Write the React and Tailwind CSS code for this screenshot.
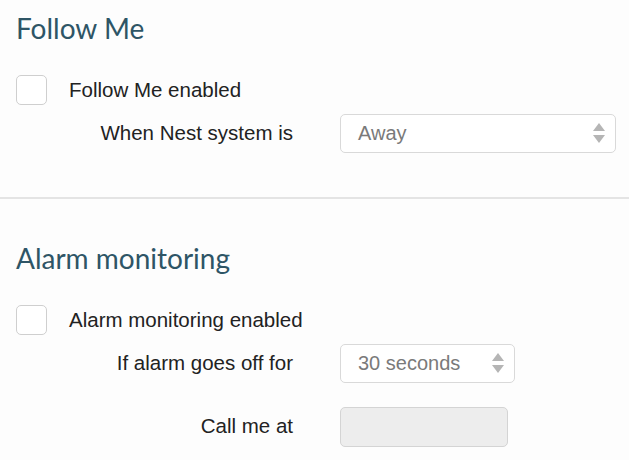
import React from "react";

function Arrows() {
  return (
    <svg width="12" height="20" viewBox="0 0 12 20" className="absolute right-[10px] top-1/2 -translate-y-1/2">
      <path d="M6 0 L12 8 L0 8 Z" fill="#b5b5b5" />
      <path d="M0 12 L12 12 L6 20 Z" fill="#b5b5b5" />
    </svg>
  );
}

function Select({ value, width }) {
  return (
    <div
      className={`relative h-[39px] rounded-[5px] border border-[#d9d9d9] bg-white flex items-center pl-[17px] text-[20px] text-[#7a7a7a] ${width}`}
    >
      {value}
      <Arrows />
    </div>
  );
}

function Checkbox() {
  return <div className="w-[31px] h-[30px] shrink-0 rounded-[5px] border border-[#cfcfcf] bg-white" />;
}

function Row({ label, children }) {
  return (
    <div className="flex items-center">
      <div className="w-[293px] shrink-0 text-right text-[20.5px] text-[#222]">{label}</div>
      <div className="ml-[47px] shrink-0">{children}</div>
    </div>
  );
}

export default function App() {
  const heading = { fontFamily: "Lato, 'Open Sans', sans-serif" };
  return (
    <div
      className="w-[629px] h-[460px] bg-[#fdfdfd] overflow-hidden"
      style={{ fontFamily: "'Liberation Sans', Arial, sans-serif" }}
    >
      <section className="pt-[10px] pb-[44px]">
        <h2 className="px-4 text-[28px] leading-[36px] text-[#2e5566]" style={heading}>
          Follow Me
        </h2>
        <div className="px-4 mt-[29px] flex items-center">
          <Checkbox />
          <span className="ml-[22px] text-[20.5px] text-[#222]">Follow Me enabled</span>
        </div>
        <div className="mt-[8px]">
          <Row label="When Nest system is">
            <Select value="Away" width="w-[276px]" />
          </Row>
        </div>
      </section>
      <div className="h-[2px] bg-[#e4e4e4]" />
      <section className="pt-[41px]">
        <h2 className="px-4 text-[28px] leading-[36px] text-[#2e5566]" style={heading}>
          Alarm monitoring
        </h2>
        <div className="px-4 mt-[29px] flex items-center">
          <Checkbox />
          <span className="ml-[22px] text-[20.5px] text-[#222]">Alarm monitoring enabled</span>
        </div>
        <div className="mt-[8px] flex flex-col gap-[24px]">
          <Row label="If alarm goes off for">
            <Select value="30 seconds" width="w-[175px]" />
          </Row>
          <Row label="Call me at">
            <div className="w-[168px] h-[40px] rounded-[5px] border border-[#d4d4d4] bg-[#ededed]" />
          </Row>
        </div>
      </section>
    </div>
  );
}
